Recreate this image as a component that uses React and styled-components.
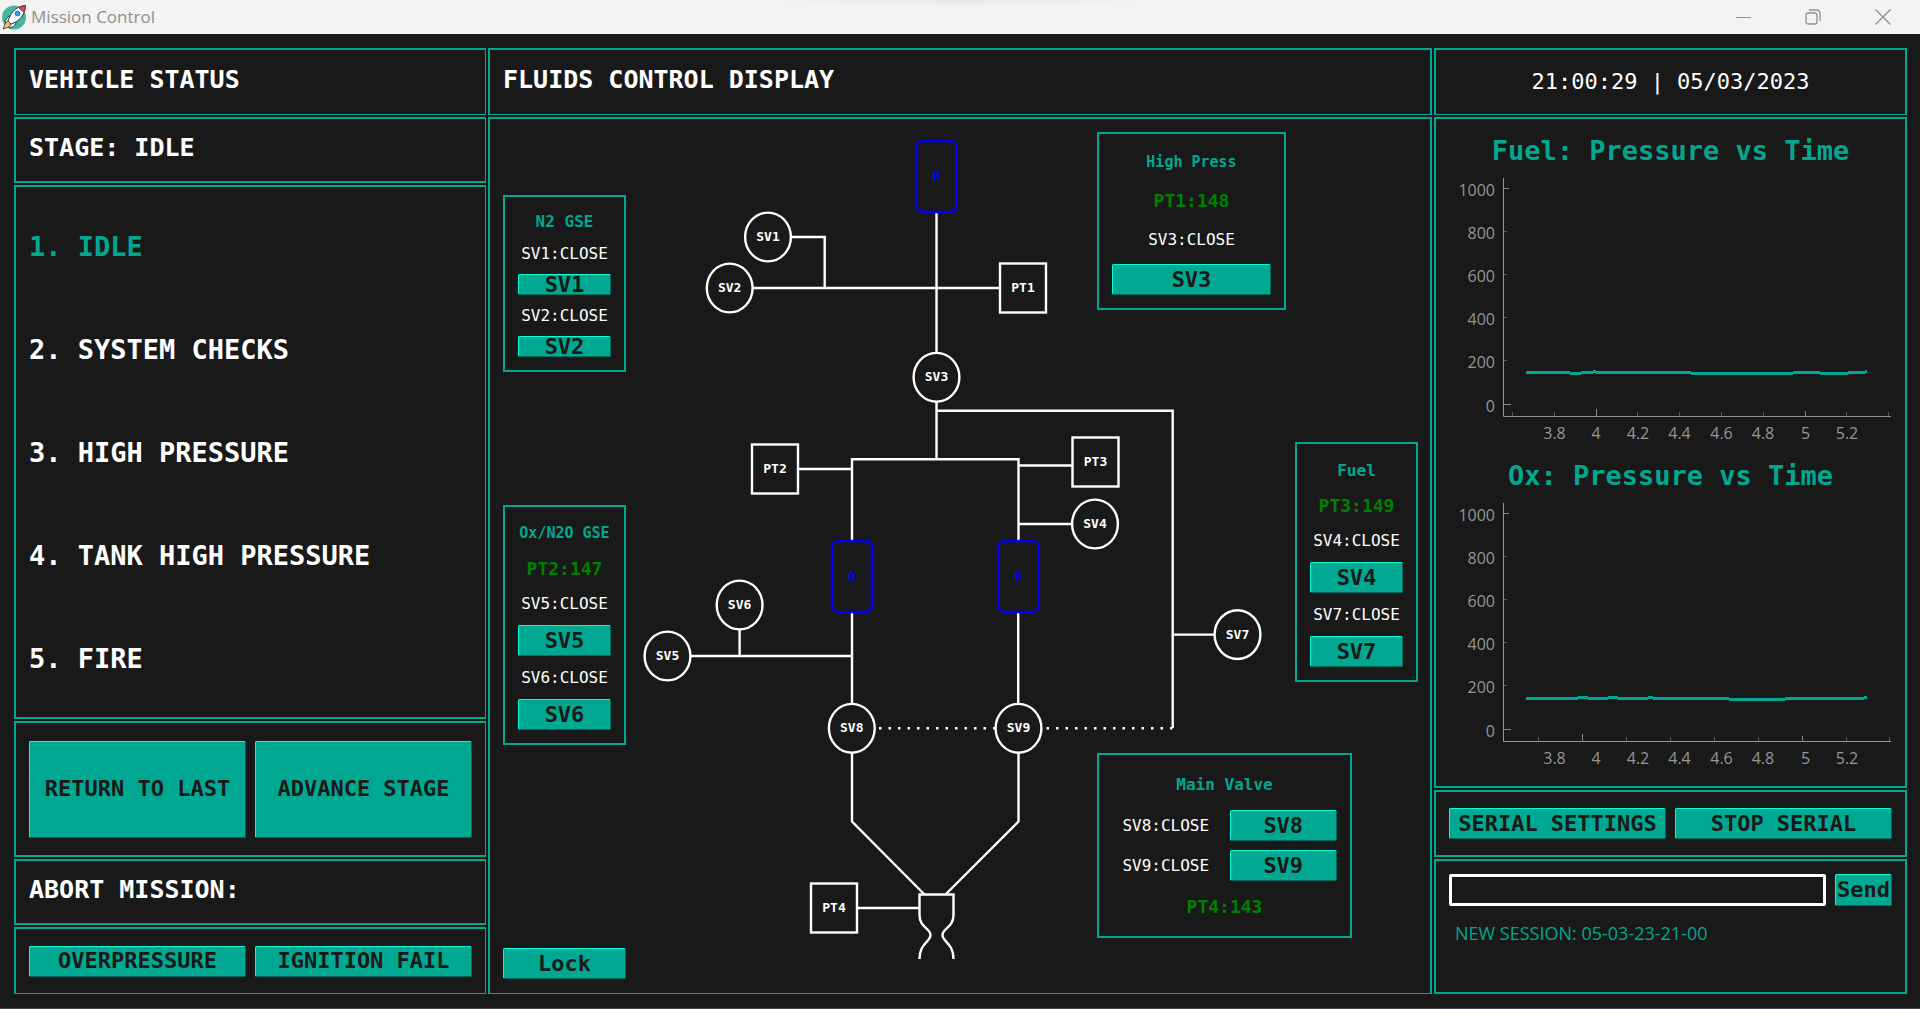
import React from "react";
import styled, { createGlobalStyle, css } from "styled-components";

const C = {
  bg: "#191919",
  teal: "#00a891",
  light: "#00ffdc",
  dark: "#006b5c",
  ok: "#008000",
  axis: "#969696",
};

const Global = createGlobalStyle`
  *, *::before, *::after { box-sizing: border-box; }
  html, body { margin: 0; background: ${C.bg}; }
  body { font-family: "DejaVu Sans Mono", "Liberation Mono", monospace; color: #fff; }
  h1, h2, h3, p, ol { margin: 0; padding: 0; }
`;

const Window = styled.div`
  min-height: 100vh;
  display: flex;
  flex-direction: column;
  background: ${C.bg};
  border-bottom: 1px solid #4b4355;
`;

const TitleBar = styled.header`
  display: flex;
  align-items: center;
  height: 34px;
  padding: 0 2px;
  background: radial-gradient(ellipse 180px 6px at 50% 0, #ebebeb 60%, #f3f3f3 100%);
  font-family: "Open Sans", "Noto Sans", sans-serif;
`;

const WindowTitle = styled.h1`
  flex: 1;
  padding-left: 5px;
  color: #8f8f8f;
  font-size: 17px;
  font-weight: 400;
  line-height: 24px;
`;

const WindowButton = styled.button`
  display: flex;
  align-items: center;
  justify-content: center;
  width: 70px;
  height: 34px;
  padding: 0;
  border: 0;
  background: transparent;
  color: #8f8f8f;
`;

const Main = styled.main`
  flex: 1;
  display: grid;
  grid-template-columns: 472fr 944fr 473fr;
  gap: 2px;
  padding: 14px 13px 14px 14px;
`;

const Column = styled.div`
  display: flex;
  flex-direction: column;
  gap: 2px;
  min-width: 0;
`;

const Panel = styled.section`
  display: flex;
  align-items: center;
  gap: 9px;
  min-height: ${(p) => p.$height || 67}px;
  padding: 0 13px;
  border: 2px solid ${C.teal};
  ${(p) => p.$thinRight && css`border-right-width: 1px;`}
  ${(p) => p.$thinBottom && css`border-bottom-width: 1px;`}
  ${(p) => p.$center && css`justify-content: center;`}
`;

const StagePanel = styled(Panel)`
  flex: 1;
  padding: 9px 13px 7px;
`;

const PlotPanel = styled(Panel)`
  flex: 1;
  flex-direction: column;
  align-items: stretch;
  gap: 0;
  padding: 13px 0 0;
`;

const ConsolePanel = styled(Panel)`
  flex-direction: column;
  align-items: stretch;
  padding: 13px;
`;

const Heading = styled.h2`
  padding-bottom: 5px;
  font-size: 25px;
  font-weight: 700;
  line-height: 30px;
`;

const Clock = styled.time`
  font-size: 22px;
  line-height: 30px;
`;

const Stages = styled.ol`
  align-self: stretch;
  flex: 1;
  display: flex;
  flex-direction: column;
  list-style: none;
`;

const Stage = styled.li`
  flex: 1;
  display: flex;
  align-items: center;
  color: ${(p) => (p.$active ? C.teal : "#fff")};
  font-size: 27px;
  font-weight: 700;
  line-height: 30px;
`;

const Button = styled.button`
  display: flex;
  align-items: center;
  justify-content: center;
  flex: ${(p) => (p.$fixed ? "none" : "1 1 0")};
  width: ${(p) => (p.$fixed ? `${p.$fixed}px` : "auto")};
  min-width: 0;
  height: ${(p) => p.$height || 31}px;
  padding: 0;
  border: 1px solid;
  border-color: ${C.light} ${C.dark} ${C.dark} ${C.light};
  border-radius: 2px;
  background: ${C.teal};
  color: ${C.bg};
  font: 700 22px/20px "DejaVu Sans Mono", "Liberation Mono", monospace;
  white-space: nowrap;
`;

const Canvas = styled.section`
  flex: 1;
  display: grid;
  padding: 13px 12px 14px 13px;
  border: 2px solid ${C.teal};
  border-bottom-width: 1px;
`;

const Diagram = styled.svg`
  grid-area: 1 / 1;
  width: 100%;
  height: 100%;
  fill: none;
  stroke: #fff;
  stroke-width: 2.4;

  text {
    fill: #fff;
    stroke: none;
    font: 700 13px "DejaVu Sans Mono", "Liberation Mono", monospace;
    text-anchor: middle;
  }
`;

const TankLetter = styled.text`
  && { fill: #0000ff; }
`;

const Controls = styled.div`
  grid-area: 1 / 1;
  z-index: 1;
  display: flex;
  justify-content: space-between;
`;

const GseControls = styled.div`
  display: flex;
  flex-direction: column;
  width: 123px;
  padding-top: 63px;
`;

const EngineControls = styled.div`
  display: flex;
  flex-direction: column;
  align-items: flex-start;
  width: 321px;
`;

const Spacer = styled.div`
  height: ${(p) => p.$size}px;
`;

const Card = styled.section`
  display: flex;
  flex-direction: column;
  align-self: ${(p) => p.$align || "flex-start"};
  gap: ${(p) => p.$gap || 9}px;
  width: ${(p) => p.$width || 123}px;
  padding: 13px;
  border: 2px solid ${C.teal};
  line-height: ${(p) => p.$line || 24}px;
  text-align: center;
  white-space: nowrap;

  ${Button} { flex: none; }
`;

const CardTitle = styled.h3`
  color: ${C.teal};
  font-size: ${(p) => (p.$small ? 15 : 16)}px;
  font-weight: 700;
`;

const Reading = styled.p`
  color: ${C.ok};
  font-size: 18px;
  font-weight: 700;
`;

const ValveState = styled.p`
  font-size: 16px;
`;

const ValveRow = styled.div`
  display: grid;
  grid-template-columns: 1fr 1fr;
  align-items: center;
  gap: 10px;
  line-height: 31px;
`;

const LockSlot = styled.div`
  display: flex;
  margin-top: auto;
`;

const PlotTitle = styled.h2`
  color: ${C.teal};
  font-size: 27px;
  font-weight: 700;
  line-height: 38px;
  text-align: center;
`;

const PlotSvg = styled.svg`
  display: block;
  width: 100%;
  stroke: ${C.axis};
  fill: none;

  text {
    fill: ${C.axis};
    stroke: none;
    font: 16px "Open Sans", "Noto Sans", sans-serif;
  }
`;

const CommandRow = styled.form`
  display: flex;
  gap: 9px;
`;

const CommandInput = styled.input`
  flex: 1;
  min-width: 0;
  height: 32px;
  padding: 0 6px;
  border: 3px solid #fff;
  border-radius: 2px;
  background: ${C.bg};
  color: #fff;
  font: 16px "Open Sans", "Noto Sans", sans-serif;
`;

const LogLine = styled.p`
  padding: 6px 6px 0;
  color: ${C.teal};
  font-family: "Open Sans", "Noto Sans", sans-serif;
  font-size: 18px;
  line-height: 24px;
`;

function RocketIcon() {
  return (
    <svg width="24" height="25" viewBox="0 0 24 25" aria-hidden="true">
      <circle cx="12" cy="12.5" r="12" fill="#45b89a" />
      <path d="M3 17 C4 13 6 11 9 11 L14 16 C14 20 12 22 8 23 Z" fill="#dfe6ee" stroke="#27345a" />
      <path d="M23.500 0.500 C17 1 12 4 8 11 L6 16 L9 19 L14 17 C20 13 23 8 23.500 0.500 Z" fill="#fff" stroke="#27345a" />
      <path d="M23.500 0.500 L17 2.500 C18 5 20 6.500 22.500 7 Z" fill="#e0483c" stroke="#27345a" strokeWidth="0.6" />
      <circle cx="15.500" cy="8.500" r="2.400" fill="#3aa0ea" stroke="#2a6fb5" />
      <path d="M6 16 L9 19 L7 22 L1 24 L3 19 Z" fill="#f6c34a" stroke="#27345a" strokeWidth="0.8" />
    </svg>
  );
}

const VALVES = [
  ["SV1", 768, 237],
  ["SV2", 729.7, 288],
  ["SV3", 936.5, 377.3],
  ["SV4", 1095, 524],
  ["SV5", 667.5, 656],
  ["SV6", 739.6, 605],
  ["SV7", 1237.5, 634.6],
  ["SV8", 851.8, 728.3],
  ["SV9", 1018.5, 728.3],
];

const SENSORS = [
  ["PT1", 1023, 288],
  ["PT2", 775, 469],
  ["PT3", 1095.5, 462],
  ["PT4", 834, 908],
];

const TANKS = [
  ["P", 936.5, 176.5],
  ["O", 852, 576.5],
  ["F", 1018.5, 576.5],
];

const PIPES = [
  "M936.5 213 V353",
  "M791 237 H824.7 V288",
  "M753 288 H1000",
  "M936.5 402 V459",
  "M936.5 410.700 H1172.700 V728",
  "M852 540 V459.300 H1018.500 V540",
  "M799 469 H852",
  "M1018.500 465.500 H1072",
  "M1018.500 524 H1072",
  "M852 613 V704",
  "M1018.200 613 V704",
  "M739.600 630 V656",
  "M691 656 H852",
  "M1172.700 634.600 H1214",
  "M852 753 V821.500 L924 894",
  "M1018.500 753 V821.500 L946 894",
  "M858 908 H919.500",
  "M919.500 959 C919.500 943 930.500 942 930.500 935 C930.500 928 919.500 928 919.500 915 V894.500 H953.500 V915 C953.500 928 942.500 928 942.500 935 C942.500 942 953.500 943 953.500 959",
];

function FluidDiagram() {
  return (
    <Diagram viewBox="503 132 915 847" role="img" aria-label="Fluids diagram">
      {PIPES.map((d) => (
        <path key={d} d={d} />
      ))}
      <path d="M879 728.300 H995 M1046.500 728.300 H1174" strokeDasharray="2.500 7" />
      {VALVES.map(([name, x, y]) => (
        <g key={name}>
          <ellipse cx={x} cy={y} rx="22.900" ry="24.400" />
          <text x={x} y={y + 4}>{name}</text>
        </g>
      ))}
      {SENSORS.map(([name, x, y]) => (
        <g key={name}>
          <rect x={x - 23} y={y - 24.5} width="46" height="49" />
          <text x={x} y={y + 4}>{name}</text>
        </g>
      ))}
      {TANKS.map(([name, x, y]) => (
        <g key={name}>
          <rect x={x - 20} y={y - 35.5} width="40" height="71" rx="6" stroke="#0000ff" />
          <TankLetter x={x} y={y + 4}>{name}</TankLetter>
        </g>
      ))}
    </Diagram>
  );
}

const Y_TICKS = [[1000, 18.5, 5], [800, 61.5, 3], [600, 104.5, 3], [400, 147.5, 3], [200, 190.5, 3], [0, 234.5, 7]];
const X_LABELS = [["3.8", 118.5], ["4", 160], ["4.2", 202], ["4.4", 243.5], ["4.6", 285.5], ["4.8", 327], ["5", 369.5], ["5.2", 411]];

function Plot({ title, ticks, trace, level }) {
  const d = trace
    .map(([x, step], i) => {
      const next = trace[i + 1];
      return next ? `M${x} ${level + step} H${next[0]}` : "";
    })
    .join(" ");
  return (
    <div>
      <PlotTitle>{title}</PlotTitle>
      <PlotSvg viewBox="0 0 469 287" role="img" aria-label={title}>
        <path d="M67.500 8 V246.500 H455" />
        {Y_TICKS.map(([label, y, len]) => (
          <g key={label}>
            <path d={`M68 ${y} h${len}`} opacity={len === 3 ? 0.5 : 0.9} />
            <text x="59" y={y + 7} textAnchor="end">{label}</text>
          </g>
        ))}
        {ticks.map(([x, len]) => (
          <path key={x} d={`M${x} 246 v${-len}`} opacity={len === 4 ? 0.5 : 0.9} />
        ))}
        {X_LABELS.map(([label, x]) => (
          <text key={label} x={x} y="269" textAnchor="middle">{label}</text>
        ))}
        <path d={d} stroke={C.teal} strokeWidth="3" />
      </PlotSvg>
    </div>
  );
}

const FUEL_TICKS = [[76.5, 4], [118.5, 4], [160.5, 7], [201.5, 4], [243.5, 4], [285.5, 4], [327.5, 4], [369.5, 5], [410.5, 4], [452.5, 4]];
const OX_TICKS = [[102.5, 4], [146.5, 7], [190.5, 4], [234.5, 4], [278.5, 4], [322.5, 4], [366.5, 5], [410.5, 4], [453.5, 4]];
const FUEL_TRACE = [[90, 0], [134, 1], [145, 0], [157, -1], [160, 0], [255, 1], [357, 0], [384, 1], [412, 0], [429, -1], [431, 0]];
const OX_TRACE = [[90, 0], [142, -1], [152, 0], [172, -1], [182, 0], [212, -1], [217, 0], [293, 1], [349, 0], [428, -1], [431, 0]];

const STAGES = ["IDLE", "SYSTEM CHECKS", "HIGH PRESSURE", "TANK HIGH PRESSURE", "FIRE"];

function Valve({ name, height }) {
  return (
    <>
      <ValveState>{name}:CLOSE</ValveState>
      <Button type="button" $height={height}>{name}</Button>
    </>
  );
}

export default function App() {
  return (
    <Window>
      <Global />
      <TitleBar>
        <RocketIcon />
        <WindowTitle>Mission Control</WindowTitle>
        <WindowButton type="button" aria-label="Minimize">
          <svg width="15" height="15" stroke="currentColor"><path d="M0 7.500 H15" /></svg>
        </WindowButton>
        <WindowButton type="button" aria-label="Restore">
          <svg width="16" height="16" fill="none" stroke="currentColor" strokeWidth="1.300">
            <rect x="1" y="4" width="11" height="11" rx="2" />
            <path d="M4 1 H11.500 A3.500 3.500 0 0 1 15 4.500 V12" />
          </svg>
        </WindowButton>
        <WindowButton type="button" aria-label="Close">
          <svg width="16" height="16" stroke="currentColor" strokeWidth="1.300"><path d="M0.500 0.500 L15.500 15.500 M15.500 0.500 L0.500 15.500" /></svg>
        </WindowButton>
      </TitleBar>
      <Main>
        <Column>
          <Panel $thinRight $thinBottom><Heading>VEHICLE STATUS</Heading></Panel>
          <Panel $height={66} $thinRight><Heading>STAGE: IDLE</Heading></Panel>
          <StagePanel $thinRight>
            <Stages>
              {STAGES.map((stage, i) => (
                <Stage key={stage} $active={i === 0}>{i + 1}. {stage}</Stage>
              ))}
            </Stages>
          </StagePanel>
          <Panel $height={136} $thinRight>
            <Button type="button" $height={97}>RETURN TO LAST</Button>
            <Button type="button" $height={97}>ADVANCE STAGE</Button>
          </Panel>
          <Panel $height={66} $thinRight><Heading>ABORT MISSION:</Heading></Panel>
          <Panel $thinRight $thinBottom>
            <Button type="button">OVERPRESSURE</Button>
            <Button type="button">IGNITION FAIL</Button>
          </Panel>
        </Column>

        <Column>
          <Panel $thinBottom><Heading>FLUIDS CONTROL DISPLAY</Heading></Panel>
          <Canvas>
            <FluidDiagram />
            <Controls>
              <GseControls>
                <Card $line={23}>
                  <CardTitle>N2 GSE</CardTitle>
                  <Valve name="SV1" height={21} />
                  <Valve name="SV2" height={21} />
                </Card>
                <Spacer $size={133} />
                <Card $gap={8} $line={27}>
                  <CardTitle $small>Ox/N2O GSE</CardTitle>
                  <Reading>PT2:147</Reading>
                  <Valve name="SV5" />
                  <Valve name="SV6" />
                </Card>
                <LockSlot><Button type="button">Lock</Button></LockSlot>
              </GseControls>
              <EngineControls>
                <Card $width={189} $line={30}>
                  <CardTitle $small>High Press</CardTitle>
                  <Reading>PT1:148</Reading>
                  <Valve name="SV3" />
                </Card>
                <Spacer $size={132} />
                <Card $gap={8} $line={27} $align="flex-end">
                  <CardTitle>Fuel</CardTitle>
                  <Reading>PT3:149</Reading>
                  <Valve name="SV4" />
                  <Valve name="SV7" />
                </Card>
                <Spacer $size={71} />
                <Card $width={255} $line={33}>
                  <CardTitle>Main Valve</CardTitle>
                  <ValveRow><Valve name="SV8" /></ValveRow>
                  <ValveRow><Valve name="SV9" /></ValveRow>
                  <Reading>PT4:143</Reading>
                </Card>
              </EngineControls>
            </Controls>
          </Canvas>
        </Column>

        <Column>
          <Panel $center $thinBottom><Clock>21:00:29 | 05/03/2023</Clock></Panel>
          <PlotPanel>
            <Plot title="Fuel: Pressure vs Time" ticks={FUEL_TICKS} trace={FUEL_TRACE} level={202.5} />
            <Plot title="Ox: Pressure vs Time" ticks={OX_TICKS} trace={OX_TRACE} level={203.5} />
          </PlotPanel>
          <Panel>
            <Button type="button">SERIAL SETTINGS</Button>
            <Button type="button">STOP SERIAL</Button>
          </Panel>
          <ConsolePanel $height={135}>
            <CommandRow onSubmit={(e) => e.preventDefault()}>
              <CommandInput aria-label="Serial command" />
              <Button type="submit" $fixed={57} $height={32}>Send</Button>
            </CommandRow>
            <LogLine>NEW SESSION: 05-03-23-21-00</LogLine>
          </ConsolePanel>
        </Column>
      </Main>
    </Window>
  );
}
